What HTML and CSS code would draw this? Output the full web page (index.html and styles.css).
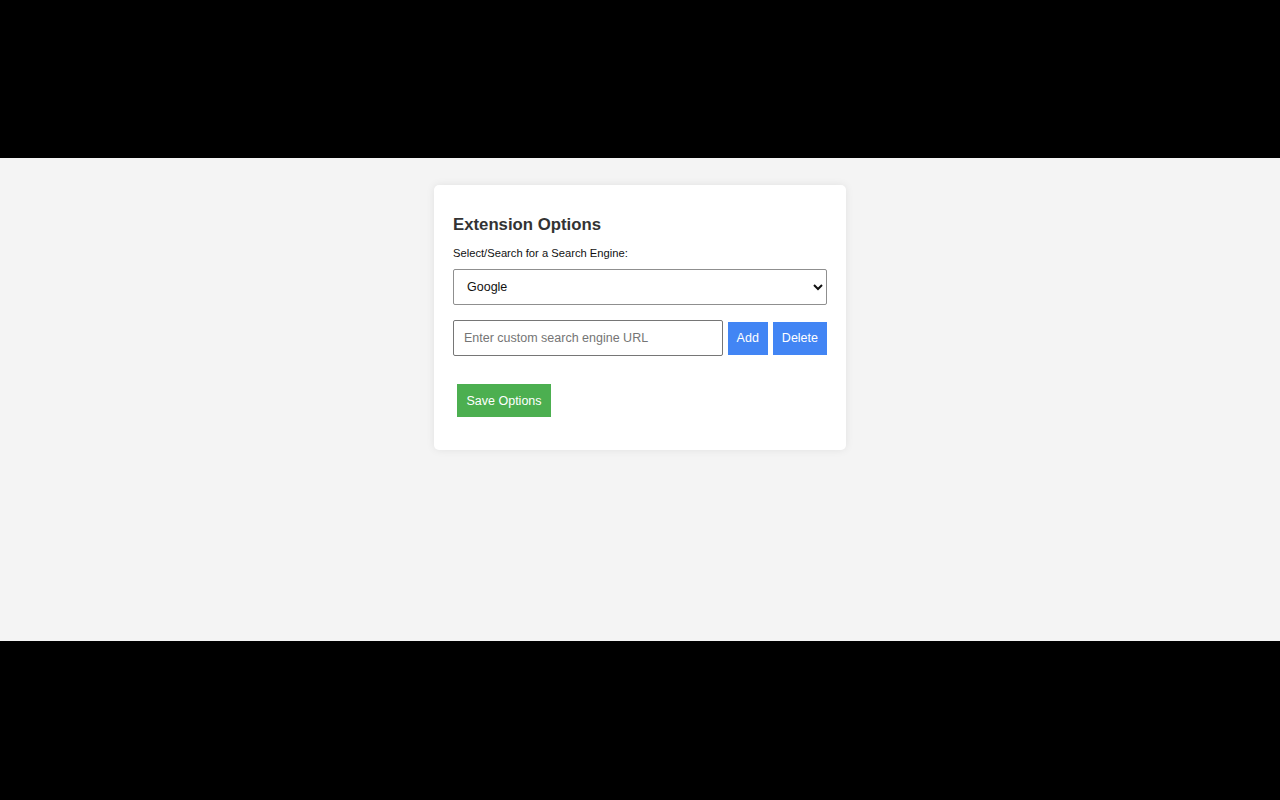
FILE: index.html
```
<!DOCTYPE html>
<html lang="en">
<head>
<meta charset="utf-8">
<title>Extension Options</title>
<link rel="stylesheet" href="styles.css">
</head>
<body>
<div class="stage">
  <div class="card">
    <h2 class="title">Extension Options</h2>
    <label class="label" for="engine">Select/Search for a Search Engine:</label>
    <select id="engine" class="select">
      <option>Google</option>
      <option>Bing</option>
      <option>DuckDuckGo</option>
    </select>
    <div class="row">
      <input class="input" type="text" placeholder="Enter custom search engine URL">
      <button class="btn btn-blue">Add</button>
      <button class="btn btn-blue">Delete</button>
    </div>
    <button class="btn btn-green save">Save Options</button>
  </div>
</div>
</body>
</html>
```
FILE: styles.css
```
html, body {
  margin: 0;
  padding: 0;
  background: #000;
}
body {
  font-family: "Liberation Sans", Arial, sans-serif;
  padding-top: 158px;
}
.stage {
  height: 483px;
  background: #f4f4f4;
  padding-top: 27px;
  box-sizing: border-box;
}
.card {
  width: 412px;
  margin: 0 auto;
  box-sizing: border-box;
  background: #fff;
  border-radius: 5px;
  box-shadow: 0 0 8px rgba(0, 0, 0, 0.08);
  padding: 19px;
  display: flex;
  flex-direction: column;
  align-items: flex-start;
}
.title {
  margin: 11px 0 12px;
  font-size: 16.75px;
  font-weight: bold;
  color: #333;
  line-height: normal;
}
.label {
  display: block;
  font-size: 11.2px;
  color: #111;
  margin-bottom: 10px;
}
.select {
  display: block;
  width: 100%;
  box-sizing: border-box;
  height: 36px;
  padding: 0 9px;
  font-family: "Liberation Sans", Arial, sans-serif;
  font-size: 12.5px;
  color: #111;
  background: #fff;
  border: 1px solid #8f8f8f;
  border-radius: 2px;
  margin-bottom: 15px;
}
.row {
  display: flex;
  align-items: center;
  gap: 5px;
  width: 100%;
}
.input {
  flex: 1;
  min-width: 0;
  height: 36px;
  box-sizing: border-box;
  padding: 0 10px;
  font-family: "Liberation Sans", Arial, sans-serif;
  font-size: 12.5px;
  border: 1px solid #767676;
  border-radius: 2px;
  outline: none;
}
.input::placeholder {
  color: #757575;
}
.btn {
  font-family: "Liberation Sans", Arial, sans-serif;
  font-size: 12.5px;
  color: #fff;
  border: none;
  padding: 0 9px;
  height: 33px;
  cursor: pointer;
}
.btn-blue {
  background: #4285f4;
}
.btn-green {
  background: #4caf50;
}
.save {
  margin: 28px 0 14px 4px;
  padding: 0 9.5px;
}
```
